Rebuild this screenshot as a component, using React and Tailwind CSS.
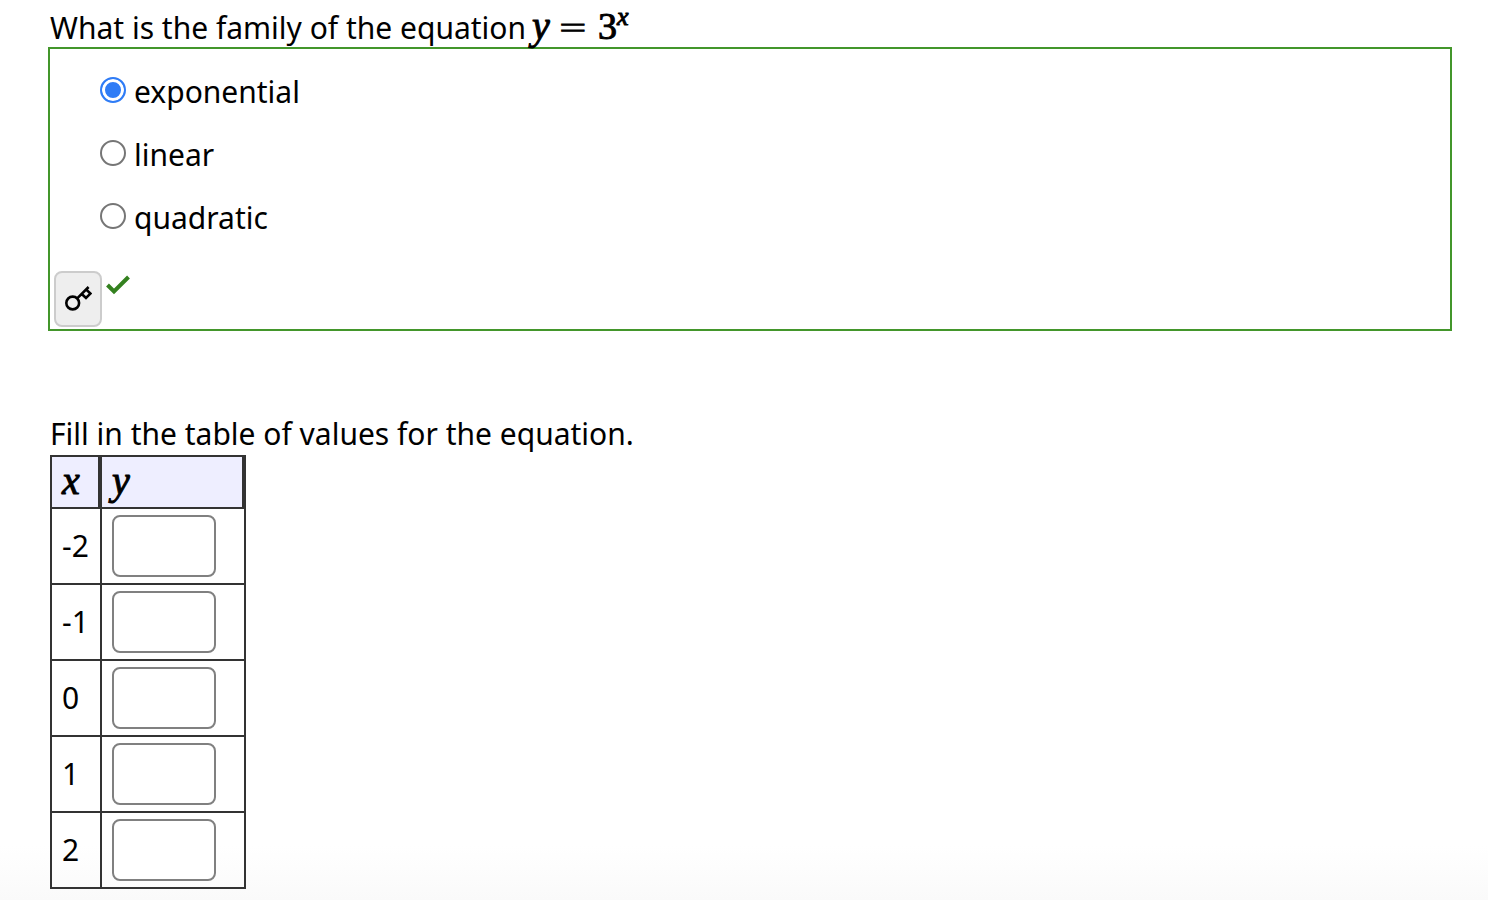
import React, { useState } from "react";

const FAMILIES = ["exponential", "linear", "quadratic"];
const X_VALUES = [-2, -1, 0, 1, 2];

function MathVar({ children, small }) {
  return (
    <i
      className={`font-['Liberation_Serif',serif] [-webkit-text-stroke:1px_black] ${
        small ? "text-[26px]" : "text-[40px]"
      } leading-none`}
    >
      {children}
    </i>
  );
}

function KeyIcon() {
  return (
    <svg viewBox="0 0 28 28" className="h-7 w-7" fill="none" stroke="#000" strokeWidth="2.6" aria-hidden="true">
      <circle cx="8.7" cy="18" r="6.4" />
      <path d="M13.2 13.4 24.6 2M18 9.2l4 3.8 4.4-4.4-3.8-3.8" />
    </svg>
  );
}

function CheckIcon() {
  return (
    <svg viewBox="0 0 24 20" className="h-5 w-6" fill="none" stroke="#34811f" strokeWidth="4" role="img" aria-label="Correct">
      <path d="M1.5 10 8 16.5 22.5 2" />
    </svg>
  );
}

export default function App() {
  const [family, setFamily] = useState("exponential");
  const [values, setValues] = useState({});

  return (
    <main className="min-h-screen bg-linear-to-t from-[#fafafa] to-white to-6% pt-1.5 pr-9 pl-12 font-['Noto_Sans',sans-serif] text-[30px] leading-10 text-black">
      {/* Question 1 */}
      <div className="flex h-[41px] items-baseline gap-1.5 pl-0.5">
        <span id="family-question">What is the family of the equation</span>
        <span className="flex items-baseline font-['Liberation_Serif',serif] text-[38px] leading-none">
          <MathVar>y</MathVar>
          <span className="pr-2.5 pl-2 font-['DejaVu_Sans_Light','DejaVu_Sans',sans-serif] text-[36px] leading-none font-extralight [-webkit-text-stroke:1px_black]">
            =
          </span>
          <span className="[-webkit-text-stroke:1px_black]">3</span>
          <sup className="-top-3.5 leading-none">
            <MathVar small>x</MathVar>
          </sup>
        </span>
      </div>

      <div
        role="radiogroup"
        aria-labelledby="family-question"
        className="border-2 border-[#43962b] px-1 pt-[23px] pb-0.5"
      >
        <div className="flex flex-col gap-[23px] pl-[46px]">
          {FAMILIES.map((name) => (
            <label key={name} className="flex items-start gap-2">
              <input
                type="radio"
                name="family"
                checked={family === name}
                onChange={() => setFamily(name)}
                className="mt-[5px] size-[26px] appearance-none rounded-full border-2 border-[#767676] bg-white checked:border-[#2f7cf6] checked:bg-[#2f7cf6] checked:inset-ring-3 checked:inset-ring-white"
              />
              <span>{name}</span>
            </label>
          ))}
        </div>
        <div className="mt-[33px] flex items-start gap-1">
          <button
            type="button"
            aria-label="Show answer"
            className="flex h-14 w-12 items-center justify-center rounded-lg border-2 border-[#ccc] bg-[#eee]"
          >
            <KeyIcon />
          </button>
          <div className="pt-1">
            <CheckIcon />
          </div>
        </div>
      </div>

      {/* Question 2 */}
      <div className="mt-[83px] pl-0.5">
        <p className="pb-px">Fill in the table of values for the equation.</p>
        <table className="border-separate border-spacing-0 border-t-2 border-l-2 border-[#333]">
          <thead>
            <tr className="h-[52px] bg-[#eef] text-left">
              <th scope="col" className="w-[50px] border-r-4 border-b-2 border-[#333] p-0 pl-2.5 font-normal">
                <MathVar>x</MathVar>
              </th>
              <th scope="col" className="w-36 border-r-4 border-b-2 border-[#333] p-0 pl-2.5 font-normal">
                <MathVar>y</MathVar>
              </th>
            </tr>
          </thead>
          <tbody>
            {X_VALUES.map((x) => (
              <tr key={x}>
                <td className="border-r-2 border-b-2 border-[#333] p-0 pl-2.5">{x}</td>
                <td className="border-r-2 border-b-2 border-[#333] px-2.5 py-1.5">
                  <input
                    type="text"
                    aria-label={`y when x is ${x}`}
                    value={values[x] ?? ""}
                    onChange={(e) => setValues({ ...values, [x]: e.target.value })}
                    className="block h-[62px] w-[104px] rounded-lg border-2 border-[#808080] bg-white px-2"
                  />
                </td>
              </tr>
            ))}
          </tbody>
        </table>
      </div>
    </main>
  );
}
